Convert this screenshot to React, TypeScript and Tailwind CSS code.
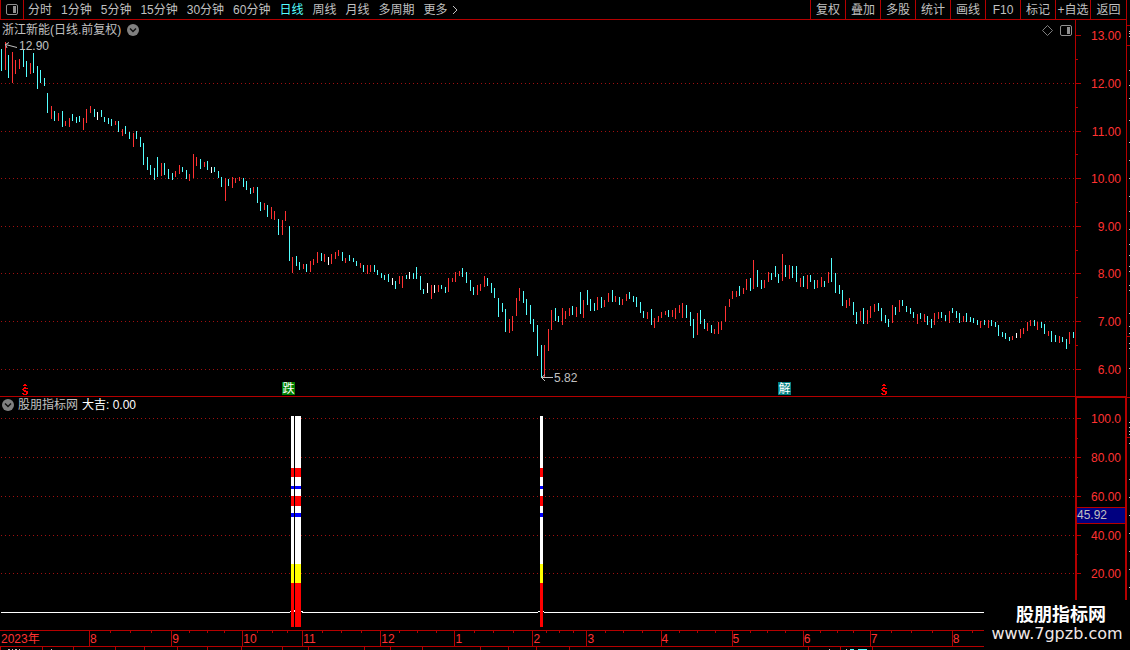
import React from 'react';

type Tone = 'u' | 'd' | 'n';
type Bar = [x: number, high: number, low: number, tone: Tone];

const PLOT_WIDTH = 1075;
const AXIS_WIDTH = 1126;

const LINE = '#b40000';
const GRID = '#a01010';
const RED = '#ff3232';
const TONES: Record<Tone, string> = { u: '#ff3232', d: '#54ffff', n: '#ffffff' };

const periods = ['分时', '1分钟', '5分钟', '15分钟', '30分钟', '60分钟', '日线', '周线', '月线', '多周期'];
const actions = ['复权', '叠加', '多股', '统计', '画线', 'F10', '标记', '+自选', '返回'];

const bars: Bar[] = [
  [1, 49, 71, 'd'], [5, 42, 70, 'u'], [8, 55, 78, 'd'], [12, 52, 83, 'u'], [15, 60, 74, 'u'], [19, 59, 69, 'u'],
  [23, 50, 67, 'd'], [26, 61, 77, 'd'], [30, 63, 74, 'u'], [33, 53, 73, 'd'], [37, 66, 89, 'd'], [40, 70, 83, 'd'],
  [44, 78, 86, 'd'], [47, 93, 113, 'd'], [51, 106, 119, 'u'], [54, 111, 121, 'd'], [58, 113, 121, 'u'], [62, 111, 127, 'd'],
  [65, 121, 126, 'u'], [69, 118, 127, 'u'], [72, 114, 121, 'd'], [76, 117, 123, 'd'], [79, 116, 122, 'd'], [83, 118, 130, 'u'],
  [86, 109, 123, 'u'], [90, 106, 113, 'u'], [94, 109, 117, 'd'], [97, 112, 120, 'n'], [101, 110, 117, 'd'], [104, 117, 122, 'd'],
  [108, 118, 124, 'd'], [111, 119, 126, 'd'], [115, 121, 125, 'u'], [118, 121, 132, 'd'], [122, 129, 136, 'u'], [125, 126, 134, 'd'],
  [129, 132, 139, 'd'], [133, 133, 147, 'u'], [136, 131, 139, 'd'], [140, 137, 147, 'd'], [143, 143, 165, 'd'], [147, 157, 170, 'd'],
  [150, 165, 175, 'd'], [154, 168, 180, 'd'], [157, 157, 177, 'd'], [161, 163, 176, 'u'], [164, 163, 175, 'd'], [168, 169, 179, 'd'],
  [172, 173, 180, 'd'], [175, 171, 177, 'u'], [179, 165, 174, 'u'], [182, 167, 172, 'd'], [186, 170, 179, 'd'], [189, 174, 181, 'u'],
  [193, 154, 178, 'u'], [196, 157, 166, 'u'], [200, 159, 169, 'd'], [204, 162, 167, 'u'], [207, 161, 170, 'd'], [211, 167, 173, 'n'],
  [214, 167, 172, 'd'], [218, 171, 178, 'd'], [221, 177, 187, 'd'], [225, 178, 201, 'u'], [228, 179, 186, 'd'], [232, 177, 188, 'u'],
  [235, 178, 183, 'u'], [239, 177, 181, 'u'], [243, 178, 187, 'd'], [246, 181, 190, 'd'], [250, 188, 194, 'd'], [253, 187, 193, 'u'],
  [257, 187, 203, 'd'], [260, 202, 211, 'd'], [264, 203, 210, 'u'], [267, 205, 217, 'd'], [271, 207, 219, 'u'], [274, 211, 220, 'u'],
  [278, 219, 235, 'd'], [282, 220, 235, 'u'], [285, 211, 221, 'u'], [289, 226, 261, 'd'], [292, 257, 273, 'u'], [296, 256, 266, 'd'],
  [299, 262, 270, 'd'], [303, 264, 269, 'u'], [306, 264, 272, 'd'], [310, 261, 272, 'u'], [313, 259, 265, 'u'], [317, 252, 263, 'u'],
  [321, 253, 261, 'd'], [324, 254, 262, 'u'], [328, 257, 265, 'n'], [331, 254, 264, 'u'], [335, 252, 259, 'u'], [338, 250, 256, 'u'],
  [342, 252, 261, 'd'], [345, 258, 263, 'u'], [349, 255, 261, 'd'], [353, 258, 262, 'd'], [356, 261, 266, 'd'], [360, 263, 268, 'u'],
  [363, 265, 272, 'd'], [367, 265, 274, 'u'], [370, 265, 272, 'u'], [374, 265, 272, 'd'], [377, 270, 275, 'd'], [381, 273, 278, 'd'],
  [384, 275, 280, 'd'], [388, 274, 282, 'd'], [392, 278, 285, 'n'], [395, 281, 289, 'd'], [399, 276, 284, 'u'], [402, 276, 288, 'u'],
  [406, 275, 279, 'd'], [409, 272, 279, 'n'], [413, 273, 279, 'd'], [416, 267, 279, 'd'], [420, 276, 290, 'd'], [423, 289, 294, 'd'],
  [427, 283, 293, 'n'], [431, 285, 299, 'u'], [434, 285, 293, 'n'], [438, 285, 292, 'u'], [441, 285, 289, 'd'], [445, 287, 293, 'd'],
  [448, 278, 292, 'u'], [452, 278, 282, 'u'], [455, 272, 282, 'u'], [459, 271, 276, 'u'], [462, 268, 277, 'd'], [466, 272, 283, 'd'],
  [470, 280, 291, 'd'], [473, 287, 295, 'd'], [477, 285, 295, 'u'], [480, 284, 291, 'u'], [484, 276, 287, 'u'], [487, 278, 286, 'd'],
  [491, 283, 293, 'd'], [494, 288, 298, 'd'], [498, 298, 317, 'd'], [502, 303, 312, 'd'], [505, 309, 332, 'd'], [509, 319, 333, 'u'],
  [512, 316, 331, 'u'], [516, 298, 316, 'u'], [519, 288, 301, 'u'], [523, 291, 303, 'd'], [526, 299, 315, 'd'], [530, 305, 324, 'd'],
  [533, 319, 332, 'd'], [537, 325, 356, 'd'], [541, 345, 378, 'd'], [544, 345, 377, 'u'], [548, 329, 351, 'u'], [551, 310, 330, 'u'],
  [555, 308, 321, 'd'], [558, 316, 322, 'd'], [562, 308, 325, 'u'], [565, 311, 319, 'u'], [569, 308, 316, 'u'], [572, 306, 315, 'd'],
  [576, 307, 317, 'u'], [580, 292, 314, 'd'], [583, 300, 318, 'u'], [587, 290, 305, 'd'], [590, 299, 311, 'd'], [594, 303, 311, 'd'],
  [597, 297, 310, 'u'], [601, 297, 308, 'd'], [604, 300, 307, 'u'], [608, 293, 302, 'u'], [612, 290, 302, 'd'], [615, 296, 302, 'u'],
  [619, 297, 305, 'd'], [622, 299, 305, 'u'], [626, 294, 301, 'u'], [629, 292, 299, 'd'], [633, 296, 302, 'd'], [636, 297, 307, 'd'],
  [640, 302, 313, 'd'], [643, 311, 318, 'd'], [647, 312, 319, 'u'], [651, 309, 325, 'd'], [654, 318, 328, 'u'], [658, 316, 322, 'u'],
  [661, 312, 318, 'u'], [665, 311, 315, 'u'], [668, 310, 317, 'd'], [672, 310, 317, 'u'], [675, 308, 319, 'u'], [679, 305, 313, 'u'],
  [682, 303, 318, 'u'], [686, 305, 318, 'd'], [690, 312, 326, 'd'], [693, 319, 338, 'd'], [697, 313, 335, 'u'], [700, 310, 324, 'd'],
  [704, 319, 329, 'd'], [707, 323, 331, 'u'], [711, 325, 333, 'd'], [714, 329, 334, 'u'], [718, 322, 334, 'u'], [721, 321, 330, 'u'],
  [725, 306, 322, 'u'], [729, 299, 307, 'u'], [732, 291, 299, 'u'], [736, 291, 297, 'u'], [739, 286, 296, 'd'], [743, 288, 294, 'u'],
  [746, 279, 290, 'u'], [750, 278, 291, 'd'], [753, 260, 289, 'u'], [757, 270, 287, 'd'], [761, 280, 289, 'd'], [764, 280, 288, 'u'],
  [768, 272, 282, 'u'], [771, 273, 280, 'd'], [775, 266, 277, 'd'], [778, 274, 283, 'd'], [782, 254, 281, 'u'], [785, 265, 277, 'd'],
  [789, 265, 279, 'u'], [792, 266, 278, 'd'], [796, 266, 282, 'd'], [800, 278, 287, 'u'], [803, 276, 287, 'd'], [807, 275, 289, 'u'],
  [810, 275, 282, 'd'], [814, 280, 289, 'd'], [817, 280, 288, 'u'], [821, 277, 287, 'u'], [824, 281, 287, 'd'], [828, 272, 283, 'u'],
  [831, 258, 282, 'd'], [835, 273, 293, 'd'], [839, 285, 294, 'd'], [842, 290, 306, 'd'], [846, 300, 308, 'u'], [849, 298, 306, 'u'],
  [853, 302, 315, 'd'], [856, 312, 324, 'd'], [860, 311, 321, 'u'], [863, 308, 324, 'd'], [867, 310, 324, 'u'], [870, 306, 318, 'u'],
  [874, 304, 312, 'u'], [878, 303, 311, 'd'], [881, 308, 321, 'd'], [885, 315, 323, 'd'], [888, 319, 327, 'd'], [892, 305, 323, 'u'],
  [895, 307, 315, 'd'], [899, 300, 312, 'u'], [902, 300, 306, 'd'], [906, 306, 312, 'd'], [910, 308, 314, 'd'], [913, 312, 318, 'd'],
  [917, 314, 324, 'u'], [920, 313, 319, 'd'], [924, 314, 322, 'u'], [927, 316, 325, 'd'], [931, 319, 328, 'd'], [934, 313, 325, 'u'],
  [938, 312, 319, 'u'], [941, 312, 318, 'd'], [945, 315, 321, 'd'], [949, 311, 323, 'u'], [952, 308, 313, 'd'], [956, 311, 318, 'd'],
  [959, 313, 323, 'd'], [963, 316, 322, 'u'], [966, 313, 322, 'd'], [970, 317, 322, 'd'], [973, 318, 323, 'd'], [977, 320, 325, 'd'],
  [980, 321, 328, 'u'], [984, 320, 325, 'd'], [988, 320, 328, 'u'], [991, 320, 326, 'd'], [995, 322, 327, 'd'], [998, 325, 336, 'd'],
  [1002, 332, 337, 'd'], [1005, 333, 339, 'd'], [1009, 337, 341, 'd'], [1012, 336, 340, 'u'], [1016, 333, 338, 'n'], [1020, 329, 338, 'u'],
  [1023, 328, 334, 'u'], [1027, 322, 331, 'u'], [1030, 320, 326, 'u'], [1034, 320, 326, 'd'], [1037, 322, 330, 'u'], [1041, 322, 328, 'd'],
  [1044, 324, 334, 'd'], [1048, 331, 336, 'u'], [1051, 331, 342, 'd'], [1055, 335, 342, 'd'], [1059, 336, 343, 'u'], [1062, 337, 342, 'd'],
  [1066, 339, 349, 'd'], [1069, 332, 344, 'u'], [1073, 332, 338, 'd'],
];

const priceTicks: [number, string][] = [
  [35, '13.00'], [83, '12.00'], [131, '11.00'], [178, '10.00'], [226, '9.00'], [273, '8.00'], [321, '7.00'], [369, '6.00'],
];
const priceMinor = [59, 107, 154, 202, 250, 297, 345];

const levelTicks: [number, string][] = [
  [418, '100.0'], [457, '80.00'], [496, '60.00'], [535, '40.00'], [573, '20.00'],
];
const levelMinor = [438, 477, 554];

// vertical colour bands of a signal column
const bands: [number, number, string][] = [
  [416, 468, '#ffffff'], [468, 477, '#ff0000'], [477, 486, '#ffffff'], [486, 489, '#0000ff'],
  [489, 496, '#ffffff'], [496, 506, '#ff0000'], [506, 513, '#ffffff'], [513, 517, '#0000ff'],
  [517, 564, '#ffffff'], [564, 583, '#ffff00'], [583, 627, '#ff0000'],
];
const signals: [number, number][] = [[291, 3], [295, 6], [540, 3]];

const months: [number, string][] = [
  [0, '2023年'], [89, '8'], [171, '9'], [242, '10'], [302, '11'], [380, '12'], [454, '1'],
  [532, '2'], [586, '3'], [660, '4'], [731, '5'], [802, '6'], [869, '7'], [951, '8'],
];
const weekTicks = [
  110, 130, 151, 189, 207, 224, 257, 272, 287, 322, 341, 361, 399, 417, 436, 474, 493, 513, 546, 559, 572,
  604, 622, 641, 678, 696, 714, 749, 766, 784, 819, 836, 852, 890, 910, 931, 971,
];
const footTicks = [0, 42, 73, 115, 144, 177, 207, 241, 282, 308, 364, 390, 422, 480, 508, 536, 568, 807, 839, 871];

const sideMarks = [
  31, 33, 36, 70, 85, 98, 120, 142, 160, 178, 196, 211, 229, 244, 255, 266, 271, 285, 290, 313, 326, 333, 343, 348,
  368, 422, 427, 431, 434, 443, 479, 497, 515, 533, 551, 569, 587,
];

const markRows = ['..##..', '.####.', '......', '..##..', '.#####', '##....', '.###..', '..####', '....##', '##..##', '.####.'];

const leftOf = (x: number) => ({ left: `${(x / PLOT_WIDTH) * 100}%` });

const PanelIcon = ({ className }: { className?: string }) => (
  <svg className={className} width="12" height="11" viewBox="0 0 12 11" aria-hidden="true">
    <rect x="0.5" y="0.5" width="11" height="10" rx="1.5" fill="none" stroke="#909090" />
    <rect x="7" y="2" width="3" height="7" fill="#909090" />
  </svg>
);

const RoundChevron = () => (
  <svg width="12" height="12" viewBox="0 0 12 12" aria-hidden="true">
    <circle cx="6" cy="6" r="6" fill="#808080" />
    <path d="M3 4.5 6 7.5 9 4.5" fill="none" stroke="#101010" strokeWidth="1.5" />
  </svg>
);

const GridLines = ({ rows }: { rows: number[] }) => (
  <>
    {rows.map((y) => (
      <line key={y} x1={1} x2={PLOT_WIDTH} y1={y + 0.5} y2={y + 0.5} stroke={GRID} strokeDasharray="1 3" />
    ))}
  </>
);

const RightsMark = ({ x }: { x: number }) => (
  <svg className="absolute bottom-px" style={leftOf(x)} width="6" height="11" viewBox="0 0 6 11" shapeRendering="crispEdges" aria-hidden="true">
    {markRows.map((row, y) =>
      row.split('').map((cell, cx) => cell === '#' && <rect key={`${cx}-${y}`} x={cx} y={y} width="1" height="1" fill="#ff0000" />)
    )}
  </svg>
);

interface AxisProps {
  top: number;
  height: number;
  ticks: [number, string][];
  minor: number[];
  stroke: number;
  children?: React.ReactNode;
}

const ValueAxis = ({ top, height, ticks, minor, stroke, children }: AxisProps) => (
  <svg className="block text-xs" width="55" height={height} viewBox={`0 ${top} 55 ${height}`} shapeRendering="crispEdges">
    <rect x="0" y={top} width={stroke} height={height} fill={LINE} />
    <rect x={52 - stroke} y={top} width={stroke} height={height} fill={LINE} />
    {minor.map((y) => (
      <rect key={y} x="0" y={y} width="3" height="1" fill={LINE} />
    ))}
    {ticks.map(([y, label]) => (
      <g key={y}>
        <rect x="0" y={y} width="6" height="1" fill={LINE} />
        <text x="46" y={y + 5} textAnchor="end" fill={RED}>
          {label}
        </text>
      </g>
    ))}
    {sideMarks.map((y) => (
      <rect key={y} x="54" y={y} width="1" height="1" fill="#c0c0c0" />
    ))}
    {children}
  </svg>
);

const Toolbar = () => (
  <header className="mr-[3px] flex h-5 border-x border-b border-[#b40000]">
    <button aria-label="侧栏" className="flex w-[23px] items-center justify-center border-r border-[#b40000]">
      <PanelIcon />
    </button>
    <nav className="flex flex-1 items-center gap-[9px] pl-1">
      {periods.map((name) => (
        <button key={name} className={name === '日线' ? 'text-[#54ffff]' : ''}>
          {name}
        </button>
      ))}
      <button className="flex items-center gap-1">
        更多
        <svg width="6" height="10" viewBox="0 0 6 10" aria-hidden="true">
          <path d="M1 1 5 5 1 9" fill="none" stroke="#c0c0c0" />
        </svg>
      </button>
    </nav>
    <div className="flex">
      {actions.map((name) => (
        <button key={name} className="w-[35px] border-l border-[#b40000] text-center whitespace-nowrap last:w-9">
          {name}
        </button>
      ))}
    </div>
  </header>
);

const PricePane = () => (
  <section className="relative border-b border-[#b40000]">
    <svg className="block h-[376px] w-full" viewBox="0 20 1075 376" preserveAspectRatio="none" shapeRendering="crispEdges">
      <GridLines rows={priceTicks.slice(1).map(([y]) => y)} />
      {bars.map(([x, high, low, tone]) => (
        <rect key={x} x={x} y={high} width="1" height={low - high} fill={TONES[tone]} />
      ))}
    </svg>
    <div className="absolute inset-x-0 top-0 flex items-center justify-between pl-[2px] pr-[3px]">
      <button className="flex h-5 items-center gap-[6px]">
        浙江新能(日线.前复权)
        <RoundChevron />
      </button>
      <div className="flex items-center gap-[7px]">
        <svg width="11" height="11" viewBox="0 0 11 11" aria-hidden="true">
          <path d="M5.5 0.5 10.5 5.5 5.5 10.5 0.5 5.5Z" fill="none" stroke="#808080" />
        </svg>
        <PanelIcon />
      </div>
    </div>
    <div className="absolute top-[18px] flex items-center gap-[2px]" style={leftOf(5)}>
      <svg width="12" height="8" viewBox="0 0 12 8" aria-hidden="true">
        <path d="M4 0.5 0.5 2.5 2 6M0.5 2.5 12 5.5" fill="none" stroke="#c0c0c0" />
      </svg>
      <span className="leading-4">12.90</span>
    </div>
    <div className="absolute top-[350px] flex items-center" style={leftOf(541)}>
      <svg width="13" height="8" viewBox="0 0 13 8" aria-hidden="true">
        <path d="M4 0.5 0.5 3.5 4 7M0.5 3.5H12" fill="none" stroke="#c0c0c0" />
      </svg>
      <span className="leading-4">5.82</span>
    </div>
    <RightsMark x={22} />
    <RightsMark x={881} />
    <span className="absolute bottom-px h-[13px] w-[13px] bg-[#008000] text-center leading-[14px] text-white" style={leftOf(282)}>
      跌
    </span>
    <span className="absolute bottom-px h-[13px] w-[13px] bg-[#008080] text-center leading-[14px] text-white" style={leftOf(778)}>
      解
    </span>
  </section>
);

const SignalPane = () => (
  <section className="relative">
    <svg className="block h-[233px] w-full" viewBox="0 397 1075 233" preserveAspectRatio="none" shapeRendering="crispEdges">
      <GridLines rows={levelTicks.map(([y]) => y)} />
      <path d="M1 612.5H290M302 612.5H538M544 612.5H1075M290 611.5H303M538 611.5H544M293 610.5H296" stroke="#ffffff" fill="none" />
      {signals.map(([x, width]) => (
        <g key={x}>
          {bands.map(([from, to, fill]) => (
            <rect key={from} x={x} y={from} width={width} height={to - from} fill={fill} />
          ))}
        </g>
      ))}
    </svg>
    <div className="absolute left-[2px] top-0 flex h-4 items-center gap-1">
      <button className="flex items-center gap-1">
        <RoundChevron />
        股朋指标网
      </button>
      <span className="text-white">大吉: 0.00</span>
    </div>
  </section>
);

const TimeAxis = () => (
  <footer className="relative mr-[3px]">
    <div className="flex h-[17px] border-y border-[#b40000] text-[#ff3232]">
      {months.map(([x, label], i) => {
        const end = months[i + 1]?.[0] ?? AXIS_WIDTH;
        return (
          <div
            key={x}
            className="border-l border-[#b40000] leading-4 first:border-transparent"
            style={{ width: `${((end - x) / AXIS_WIDTH) * 100}%` }}
          >
            {label}
          </div>
        );
      })}
    </div>
    <svg className="block h-[3px] w-full" viewBox="0 647 1126 3" preserveAspectRatio="none" shapeRendering="crispEdges">
      {footTicks.map((x) => (
        <rect key={x} x={x} y="647" width="1" height="3" fill={LINE} />
      ))}
      <path d="M8 649.5h2M12 649.5h1M15 649.5h2M19 649.5h1M51 649.5h1M828 649.5h1M845 649.5h1" stroke="#c0c0c0" />
      <path d="M849 649.5h4M857 649.5h9" stroke="#54ffff" />
    </svg>
    <svg className="absolute inset-x-0 top-px h-[3px] w-full" viewBox="0 631 1126 3" preserveAspectRatio="none" shapeRendering="crispEdges" aria-hidden="true">
      {weekTicks.map((x) => (
        <rect key={x} x={x} y="631" width="1" height="2" fill={LINE} />
      ))}
    </svg>
  </footer>
);

export default function App(): React.ReactElement {
  return (
    <div className="relative flex min-h-screen flex-col overflow-hidden bg-black font-['Liberation_Sans','Noto_Sans_CJK_SC',sans-serif] text-xs text-[#c0c0c0]">
      <Toolbar />
      <main className="flex">
        <div className="min-w-0 flex-1">
          <PricePane />
          <SignalPane />
        </div>
        <div className="w-[55px] shrink-0">
          <ValueAxis top={20} height={376} ticks={priceTicks} minor={priceMinor} stroke={1}>
            <path d="M52 25.5h3M52 45.5h3M52 336.5h3" stroke={LINE} />
          </ValueAxis>
          <ValueAxis top={396} height={234} ticks={levelTicks} minor={levelMinor} stroke={2}>
            <rect x="0" y="396" width="52" height="2" fill={LINE} />
            <path d="M52 397.5h3M52 437.5h3" stroke={LINE} />
            <rect x="2" y="507" width="48" height="17" fill={LINE} />
            <rect x="2" y="508" width="48" height="15" fill="#000080" />
            <text x="2" y="519" fill="#c0c0c0">
              45.92
            </text>
          </ValueAxis>
        </div>
      </main>
      <TimeAxis />
      <div className="absolute bottom-0 right-0 flex h-[50px] w-[146px] flex-col items-center bg-black pt-[5px] text-white">
        <strong className="pl-2 text-lg leading-5">股朋指标网</strong>
        <a href="#" className="font-['DejaVu_Sans',sans-serif] text-base leading-[18px] text-[#f0e8e8]">
          www.7gpzb.com
        </a>
      </div>
    </div>
  );
}
